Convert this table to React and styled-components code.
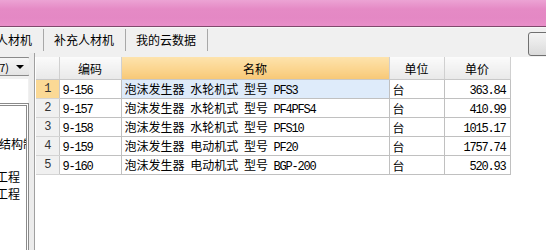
import React from 'react';
import styled, { createGlobalStyle } from 'styled-components';

const GlobalStyle = createGlobalStyle`
  html, body {
    margin: 0;
    padding: 0;
    background: #f0f0f0;
    overflow: hidden;
  }
  body {
    font-family: "Noto Sans CJK SC", "Liberation Sans", sans-serif;
    font-size: 12px;
    color: #000;
  }
`;

const Window = styled.div`
  width: 546px;
  height: 250px;
  display: flex;
  flex-direction: column;
  overflow: hidden;
`;

const TitleBar = styled.div`
  height: 26px;
  flex-shrink: 0;
  background: linear-gradient(180deg, #eca3d4 0%, #e58ac5 35%, #e488c4 70%, #e98fc9 100%);
  border-bottom: 1px solid #7e4a6c;
`;

const TabBar = styled.div`
  height: 25px;
  flex-shrink: 0;
  display: flex;
  align-items: stretch;
  background: #f0f0f0;
  border-top: 1px solid #f8f8f8;
`;

const Tab = styled.div`
  display: flex;
  align-items: center;
  padding: 0 11px 1px 10px;
  margin: 1px 0 2px ${p => p.$offset || 0}px;
  border-right: 1px solid #a8a8a8;
  white-space: nowrap;
  flex-shrink: 0;
`;

const Spacer = styled.div`
  flex: 1;
`;

const EdgeButton = styled.div`
  width: 30px;
  margin: 4px -14px -3px 0;
  border: 1px solid #707070;
  border-radius: 3px;
  background: linear-gradient(180deg, #f4f4f4 0%, #e8e8e8 50%, #dadada 100%);
  flex-shrink: 0;
`;

const Body = styled.div`
  flex: 1;
  display: flex;
  min-height: 0;
`;

const LeftPane = styled.div`
  width: 29px;
  flex-shrink: 0;
  display: flex;
  flex-direction: column;
  overflow: hidden;
`;

const ComboRow = styled.div`
  height: 26px;
  display: flex;
  justify-content: flex-end;
  align-items: flex-start;
  overflow: hidden;
  padding-top: 4px;
  box-sizing: border-box;
`;

const Combo = styled.div`
  width: 90px;
  height: 19px;
  flex-shrink: 0;
  margin-right: -2px;
  box-sizing: border-box;
  border: 1px solid #8a8a8a;
  border-radius: 3px;
  background: linear-gradient(180deg, #f6f6f6, #e4e4e4);
  display: flex;
  align-items: center;
  justify-content: flex-end;
  padding-right: 6px;
  gap: 7px;
  font-size: 11px;
  white-space: nowrap;
`;

const Arrow = styled.span`
  width: 0;
  height: 0;
  border-left: 4px solid transparent;
  border-right: 4px solid transparent;
  border-top: 4px solid #000;
`;

const Gap = styled.div`
  height: 24px;
  background: #fff;
  margin-right: 1px;
`;

const TreeBox = styled.div`
  flex: 1;
  background: #fff;
  border-top: 3px double #8a8a8a;
  border-right: 3px double #8a8a8a;
  overflow: hidden;
  padding-top: 30px;
`;

const TreeLine = styled.div`
  height: 16.5px;
  line-height: 16.5px;
  white-space: nowrap;
  overflow: hidden;
  margin-left: ${p => p.$shift}px;
`;

const Splitter = styled.div`
  width: 5px;
  flex-shrink: 0;
  background: #ececec;
  border-right: 1px solid #a0a0a0;
`;

const GridArea = styled.div`
  flex: 1;
  margin-top: 4px;
  background: #fff;
  overflow: hidden;
`;

const Grid = styled.table`
  border-collapse: collapse;
  table-layout: fixed;
  width: 474px;
  margin-left: 1px;
`;

const Head = styled.th`
  height: 22px;
  padding: 0;
  font-weight: normal;
  text-align: center;
  border-right: 1px solid #d0d0d0;
  border-bottom: 1px solid #c8c8c8;
  background: ${p => p.$active
    ? 'linear-gradient(180deg, #fde3ad 0%, #fbd58f 55%, #f7c877 100%)'
    : 'linear-gradient(180deg, #fbfbfb 0%, #f1f1f1 55%, #e9e9e9 100%)'};
`;

const Num = styled.td`
  height: 18px;
  padding: 0;
  text-align: center;
  font-family: "Liberation Mono", monospace;
  font-size: 12px;
  letter-spacing: -1.2px;
  color: #333;
  border-right: 1px solid #c8c8c8;
  border-bottom: 1px solid #d4d4d4;
  background: ${p => p.$active ? '#fbd995' : '#f0f0f0'};
`;

const Cell = styled.td`
  height: 18px;
  padding: 0 ${p => p.$right ? '4px' : '0'} 0 ${p => p.$right ? '0' : '3px'};
  text-align: ${p => p.$right ? 'right' : 'left'};
  white-space: nowrap;
  word-spacing: 3px;
  overflow: hidden;
  border-right: 1px solid #c0c0c0;
  border-bottom: 1px solid #c0c0c0;
  background: ${p => p.$current ? '#deebfa' : '#fff'};
`;

/* half-width Latin runs: 6px per glyph like the CJK UI font */
const Ascii = styled.span`
  font-family: "Liberation Mono", monospace;
  font-size: 12px;
  letter-spacing: -1.2px;
  word-spacing: 0;
`;

const rows = [
  { code: '9-156', name: '泡沫发生器 水轮机式 型号 ', model: 'PFS3', unit: '台', price: '363.84' },
  { code: '9-157', name: '泡沫发生器 水轮机式 型号 ', model: 'PF4PFS4', unit: '台', price: '410.99' },
  { code: '9-158', name: '泡沫发生器 水轮机式 型号 ', model: 'PFS10', unit: '台', price: '1015.17' },
  { code: '9-159', name: '泡沫发生器 电动机式 型号 ', model: 'PF20', unit: '台', price: '1757.74' },
  { code: '9-160', name: '泡沫发生器 电动机式 型号 ', model: 'BGP-200', unit: '台', price: '520.93' },
];

const tree = [
  { text: '钢结构制作', shift: -13 },
  { text: '', shift: 0 },
  { text: '安装工程', shift: -28 },
  { text: '土建工程', shift: -28 },
];

export default function App() {
  return (
    <Window>
      <GlobalStyle />
      <TitleBar />
      <TabBar>
        <Tab $offset={-38}>全部人材机</Tab>
        <Tab>补充人材机</Tab>
        <Tab>我的云数据</Tab>
        <Spacer />
        <EdgeButton />
      </TabBar>
      <Body>
        <LeftPane>
          <ComboRow>
            <Combo>定额(2007)<Arrow /></Combo>
          </ComboRow>
          <Gap />
          <TreeBox>
            {tree.map((t, i) => (
              <TreeLine key={i} $shift={t.shift}>{t.text}</TreeLine>
            ))}
          </TreeBox>
        </LeftPane>
        <Splitter />
        <GridArea>
          <Grid>
            <colgroup>
              <col style={{ width: 23 }} />
              <col style={{ width: 62 }} />
              <col style={{ width: 268 }} />
              <col style={{ width: 55 }} />
              <col style={{ width: 66 }} />
            </colgroup>
            <thead>
              <tr>
                <Head />
                <Head>编码</Head>
                <Head $active>名称</Head>
                <Head>单位</Head>
                <Head>单价</Head>
              </tr>
            </thead>
            <tbody>
              {rows.map((r, i) => (
                <tr key={r.code}>
                  <Num $active={i === 0}>{i + 1}</Num>
                  <Cell><Ascii>{r.code}</Ascii></Cell>
                  <Cell $current={i === 0}>{r.name}<Ascii>{r.model}</Ascii></Cell>
                  <Cell>{r.unit}</Cell>
                  <Cell $right><Ascii>{r.price}</Ascii></Cell>
                </tr>
              ))}
            </tbody>
          </Grid>
        </GridArea>
      </Body>
    </Window>
  );
}
